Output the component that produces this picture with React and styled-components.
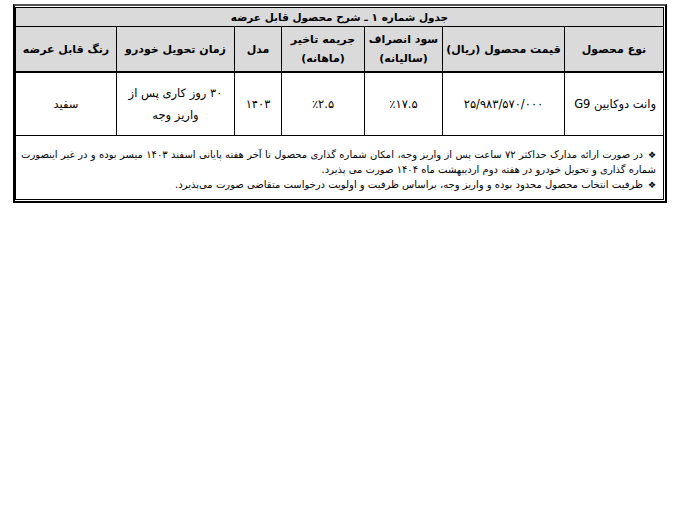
import React from "react";
import styled, { createGlobalStyle } from "styled-components";

const GlobalStyle = createGlobalStyle`
    html, body {
        margin: 0;
        padding: 0;
        background: #ffffff;
    }
    body {
        font-family: "DejaVu Sans", "Noto Sans", sans-serif;
        color: #000;
    }
`

const COLUMNS = [
    { key: "type", title: ["نوع محصول"], width: 99 },
    { key: "price", title: ["قیمت محصول (ریال)"], width: 122 },
    { key: "profit", title: ["سود انصراف", "(سالیانه)"], width: 78 },
    { key: "penalty", title: ["جریمه تاخیر", "(ماهانه)"], width: 83 },
    { key: "model", title: ["مدل"], width: 47 },
    { key: "delivery", title: ["زمان تحویل خودرو"], width: 118 },
    { key: "color", title: ["رنگ قابل عرضه"], width: 101 },
]

const ROW = {
    type: "وانت دوکابین G9",
    price: "۲۵/۹۸۳/۵۷۰/۰۰۰",
    profit: "٪۱۷.۵",
    penalty: "٪۲.۵",
    model: "۱۴۰۳",
    delivery: ["۳۰ روز کاری پس از", "واریز وجه"],
    color: "سفید",
}

const NOTES = [
    "در صورت ارائه مدارک حداکثر ۷۲ ساعت پس از واریز وجه، امکان شماره گذاری محصول تا آخر هفته پایانی اسفند ۱۴۰۳ میسر بوده و در غیر اینصورت شماره گذاری و تحویل خودرو در هفته دوم اردیبهشت ماه ۱۴۰۴ صورت می پذیرد.",
    "ظرفیت انتخاب محصول محدود بوده و واریز وجه، براساس ظرفیت و اولویت درخواست متقاضی صورت می‌پذیرد.",
]

function App() {
    return (
        <Page>
            <GlobalStyle />
            <Frame>
                <Table>
                    <colgroup>
                        {COLUMNS.map(col => (
                            <col key={col.key} style={{ width: col.width }} />
                        ))}
                    </colgroup>
                    <thead>
                        <tr>
                            <Caption colSpan={COLUMNS.length}>
                                جدول شماره ۱ ـ شرح محصول قابل عرضه
                            </Caption>
                        </tr>
                        <tr>
                            {COLUMNS.map(col => (
                                <Th key={col.key}>
                                    {col.title.map(line => (
                                        <Line key={line}>{line}</Line>
                                    ))}
                                </Th>
                            ))}
                        </tr>
                    </thead>
                    <tbody>
                        <tr>
                            {COLUMNS.map(col => {
                                const value = ROW[col.key]
                                return (
                                    <Td key={col.key} $align={col.key === "type" ? "right" : "center"}>
                                        {Array.isArray(value)
                                            ? value.map(line => <Line key={line}>{line}</Line>)
                                            : value}
                                    </Td>
                                )
                            })}
                        </tr>
                        <tr>
                            <NotesCell colSpan={COLUMNS.length}>
                                {NOTES.map(note => (
                                    <Note key={note}>
                                        <Bullet>❖</Bullet>{note}
                                    </Note>
                                ))}
                            </NotesCell>
                        </tr>
                    </tbody>
                </Table>
            </Frame>
        </Page>
    )
}

export default App;

const Page = styled.div`
    padding: 4px 0 0 13px;
    width: 654px;
`
const Frame = styled.div`
    border: 2px solid #000;
    border-top-color: #555;
    padding: 1px;
    box-shadow: 0 2px 0 #8a8a8a;
    direction: rtl;
`
const Table = styled.table`
    width: 100%;
    table-layout: fixed;
    border-collapse: collapse;
    border: 1px solid #000;
`
const Caption = styled.th`
    background-color: #dadada;
    height: 18px;
    padding: 0;
    font-size: 10.5px;
    font-weight: bold;
    text-align: center;
    border-bottom: 1px solid #000;
`
const Th = styled.th`
    background-color: #dadada;
    height: 44px;
    padding: 0 2px;
    font-size: 11px;
    font-weight: bold;
    text-align: center;
    vertical-align: middle;
    border-left: 1px solid #000;
    border-bottom: 2px solid #000;
    line-height: 19px;
`
const Line = styled.div`
    white-space: nowrap;
`
const Td = styled.td`
    height: 62px;
    padding: 0 7px;
    font-size: 11.5px;
    text-align: ${props => props.$align};
    vertical-align: middle;
    border-left: 1px solid #000;
    border-bottom: 1px solid #000;
    line-height: 22px;
`
const NotesCell = styled.td`
    padding: 11px 7px 7px 5px;
    font-size: 10px;
    line-height: 15px;
    vertical-align: top;
`
const Note = styled.p`
    margin: 0;
    text-align: justify;
`
const Bullet = styled.span`
    display: inline-block;
    font-size: 9px;
    line-height: 10px;
    margin-left: 5px;
`
